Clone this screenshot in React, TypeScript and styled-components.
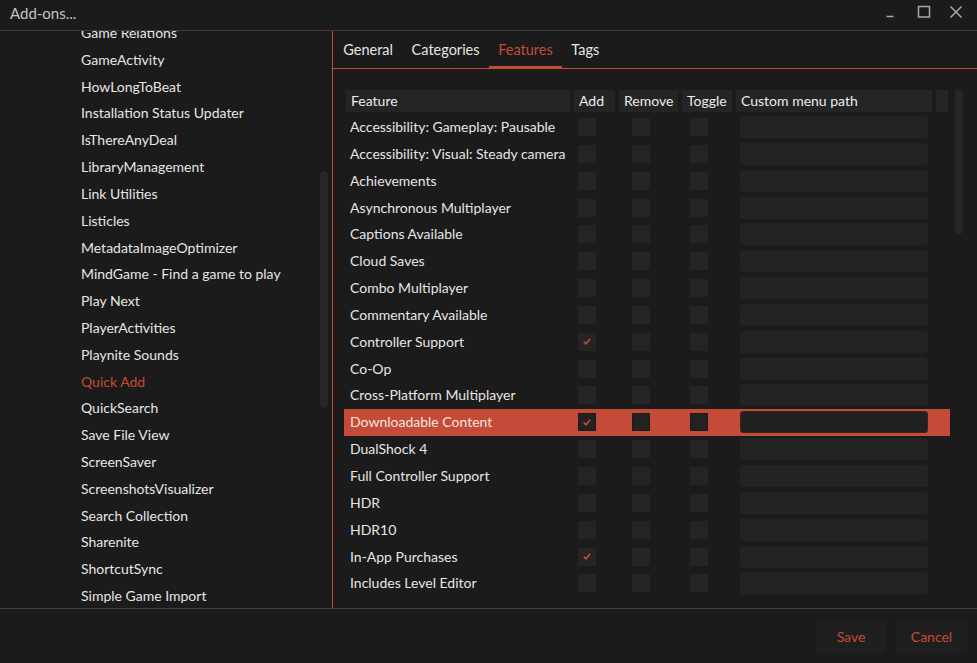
import { createGlobalStyle, styled } from "styled-components";

const GlobalStyle = createGlobalStyle`
  html, body {
    margin: 0;
    padding: 0;
    background: #1b1b1b;
  }
  * {
    box-sizing: border-box;
  }
`;

const ACCENT = "#c64a36";

const addons = [
  "Game Relations",
  "GameActivity",
  "HowLongToBeat",
  "Installation Status Updater",
  "IsThereAnyDeal",
  "LibraryManagement",
  "Link Utilities",
  "Listicles",
  "MetadataImageOptimizer",
  "MindGame - Find a game to play",
  "Play Next",
  "PlayerActivities",
  "Playnite Sounds",
  "Quick Add",
  "QuickSearch",
  "Save File View",
  "ScreenSaver",
  "ScreenshotsVisualizer",
  "Search Collection",
  "Sharenite",
  "ShortcutSync",
  "Simple Game Import",
];

const features = [
  { name: "Accessibility: Gameplay: Pausable" },
  { name: "Accessibility: Visual: Steady camera" },
  { name: "Achievements" },
  { name: "Asynchronous Multiplayer" },
  { name: "Captions Available" },
  { name: "Cloud Saves" },
  { name: "Combo Multiplayer" },
  { name: "Commentary Available" },
  { name: "Controller Support", add: true },
  { name: "Co-Op" },
  { name: "Cross-Platform Multiplayer" },
  { name: "Downloadable Content", add: true, selected: true },
  { name: "DualShock 4" },
  { name: "Full Controller Support" },
  { name: "HDR" },
  { name: "HDR10" },
  { name: "In-App Purchases", add: true },
  { name: "Includes Level Editor" },
];

const tabs = ["General", "Categories", "Features", "Tags"];

const Check = () => (
  <svg width="8" height="7" viewBox="0 0 8 7">
    <path d="M0.8 3.6 L3 5.8 L7.2 0.8" fill="none" stroke={ACCENT} strokeWidth="1.6" />
  </svg>
);

const App = () => {
  return (
    <Window>
      <GlobalStyle />
      <TitleBar>
        <Title>Add-ons...</Title>
        <Controls>
          <ControlButton>
            <svg width="12" height="12" viewBox="0 0 12 12">
              <path d="M0.5 10.5 H7.5" stroke="#a8a8a8" strokeWidth="1.5" />
            </svg>
          </ControlButton>
          <ControlButton>
            <svg width="14" height="14" viewBox="0 0 14 14">
              <rect x="1.5" y="1.5" width="11" height="10.5" fill="none" stroke="#a8a8a8" strokeWidth="1.5" />
            </svg>
          </ControlButton>
          <ControlButton>
            <svg width="14" height="14" viewBox="0 0 14 14">
              <path d="M1.5 1.5 L12.5 12.5 M12.5 1.5 L1.5 12.5" stroke="#a8a8a8" strokeWidth="1.5" />
            </svg>
          </ControlButton>
        </Controls>
      </TitleBar>

      <Body>
        <Sidebar>
          <AddonList>
            {addons.map((a) => (
              <AddonItem key={a} $active={a === "Quick Add"}>
                {a}
              </AddonItem>
            ))}
          </AddonList>
          <SideScroll />
        </Sidebar>

        <Main>
          <TabStrip>
            {tabs.map((t) => (
              <Tab key={t} $active={t === "Features"}>
                {t}
              </Tab>
            ))}
          </TabStrip>

          <TableArea>
            <Table>
              <HeaderRow>
                <HeaderCell>Feature</HeaderCell>
                <HeaderCell>Add</HeaderCell>
                <HeaderCell>Remove</HeaderCell>
                <HeaderCell>Toggle</HeaderCell>
                <HeaderCell>Custom menu path</HeaderCell>
                <HeaderCell />
              </HeaderRow>
              <Rows>
                {features.map((f) => (
                  <Row key={f.name} $selected={!!f.selected}>
                    <Name>{f.name}</Name>
                    <Cell>
                      <Box $offset={4} $selected={!!f.selected}>
                        {f.add && <Check />}
                      </Box>
                    </Cell>
                    <Cell>
                      <Box $offset={13} $selected={!!f.selected} />
                    </Cell>
                    <Cell>
                      <Box $offset={8} $selected={!!f.selected} />
                    </Cell>
                    <Cell>
                      <PathInput $selected={!!f.selected} />
                    </Cell>
                    <Cell />
                  </Row>
                ))}
              </Rows>
            </Table>
            <TableScroll />
          </TableArea>
        </Main>
      </Body>

      <Footer>
        <FooterButton $width={70}>Save</FooterButton>
        <FooterButton $width={71}>Cancel</FooterButton>
      </Footer>
    </Window>
  );
};

export default App;

const Window = styled.div`
  width: 977px;
  height: 663px;
  background: #1b1b1b;
  display: flex;
  flex-direction: column;
  font-family: Lato, "Noto Sans", sans-serif;
  color: #e6e6e6;
  overflow: hidden;
`;

const TitleBar = styled.div`
  height: 31px;
  flex-shrink: 0;
  display: flex;
  align-items: center;
  justify-content: space-between;
  padding: 0 10px 1px 10px;
  border-bottom: 1px solid #4a3632;
`;

const Title = styled.div`
  font-size: 15px;
  color: #c4c4c4;
  margin-top: -3px;
`;

const Controls = styled.div`
  display: flex;
  align-items: center;
  gap: 18px;
  margin-top: -5px;
  margin-right: 4px;
`;

const ControlButton = styled.div`
  width: 14px;
  height: 14px;
  display: flex;
  align-items: center;
  justify-content: center;
`;

const Body = styled.div`
  flex: 1;
  display: flex;
  min-height: 0;
`;

const Sidebar = styled.div`
  width: 333px;
  flex-shrink: 0;
  border-right: 1px solid ${ACCENT};
  position: relative;
  overflow: hidden;
`;

const AddonList = styled.div`
  margin-top: -11px;
  padding-left: 81px;
  display: flex;
  flex-direction: column;
`;

const AddonItem = styled.div<{ $active?: boolean }>`
  height: 26.82px;
  line-height: 26.82px;
  font-size: 14px;
  white-space: nowrap;
  color: ${(p) => (p.$active ? ACCENT : "#e6e6e6")};
`;

const SideScroll = styled.div`
  position: absolute;
  left: 320px;
  top: 140px;
  width: 8px;
  height: 237px;
  border-radius: 4px;
  background: #262626;
`;

const Main = styled.div`
  flex: 1;
  display: flex;
  flex-direction: column;
  min-width: 0;
`;

const TabStrip = styled.div`
  height: 38px;
  flex-shrink: 0;
  display: flex;
  padding-left: 1px;
  border-bottom: 1px solid ${ACCENT};
`;

const Tab = styled.div<{ $active?: boolean }>`
  padding: 0 9.3px;
  display: flex;
  align-items: center;
  font-size: 14.5px;
  color: ${(p) => (p.$active ? ACCENT : "#e6e6e6")};
  box-shadow: ${(p) => (p.$active ? `inset 0 -2px 0 ${ACCENT}` : "none")};
`;

const TableArea = styled.div`
  flex: 1;
  position: relative;
  padding: 21px 0 0 11px;
  min-height: 0;
`;

const Table = styled.div`
  width: 606px;
  height: 507px;
  overflow: hidden;
  display: flex;
  flex-direction: column;
`;

const columns = "224px 41px 59px 50px 196px 12px";

const HeaderRow = styled.div`
  display: grid;
  grid-template-columns: ${columns};
  column-gap: 4px;
  padding: 0 2px;
  height: 22px;
  flex-shrink: 0;
`;

const HeaderCell = styled.div`
  background: #242424;
  font-size: 14px;
  color: #ececec;
  padding-left: 5px;
  line-height: 21px;
  white-space: nowrap;
`;

const Rows = styled.div`
  margin-top: 1.6px;
  display: flex;
  flex-direction: column;
`;

const Row = styled.div<{ $selected: boolean }>`
  display: grid;
  grid-template-columns: ${columns};
  column-gap: 4px;
  padding: 0 2px;
  height: 26.85px;
  flex-shrink: 0;
  align-items: center;
  background: ${(p) => (p.$selected ? "#c44b37" : "transparent")};
  color: ${(p) => (p.$selected ? "#f4e6e2" : "#e6e6e6")};
`;

const Name = styled.div`
  font-size: 14px;
  padding-left: 4px;
  white-space: nowrap;
  margin-top: -1px;
`;

const Cell = styled.div`
  display: flex;
  align-items: center;
`;

const Box = styled.div<{ $offset: number; $selected: boolean }>`
  width: 18px;
  height: 18px;
  margin-left: ${(p) => p.$offset}px;
  background: ${(p) => (p.$selected ? "#222222" : "#242424")};
  border: 1px solid ${(p) => (p.$selected ? "#1c1c1c" : "#242424")};
  display: flex;
  align-items: center;
  justify-content: center;
`;

const PathInput = styled.div<{ $selected: boolean }>`
  width: 188px;
  height: 22px;
  margin-left: 4px;
  border-radius: 3px;
  background: ${(p) => (p.$selected ? "#212121" : "#232323")};
  border: 1px solid ${(p) => (p.$selected ? "#3a2522" : "#232323")};
`;

const TableScroll = styled.div`
  position: absolute;
  left: 622px;
  top: 20px;
  width: 8px;
  height: 145px;
  border-radius: 4px;
  background: #262626;
`;

const Footer = styled.div`
  height: 55px;
  flex-shrink: 0;
  border-top: 1px solid #4a3a33;
  display: flex;
  justify-content: flex-end;
  align-items: flex-start;
  gap: 10px;
  padding: 11px 10px 0 0;
`;

const FooterButton = styled.div<{ $width: number }>`
  width: ${(p) => p.$width}px;
  height: 33px;
  border-radius: 3px;
  background: #1f1f1f;
  color: ${ACCENT};
  font-size: 14px;
  padding-bottom: 1px;
  display: flex;
  align-items: center;
  justify-content: center;
`;
